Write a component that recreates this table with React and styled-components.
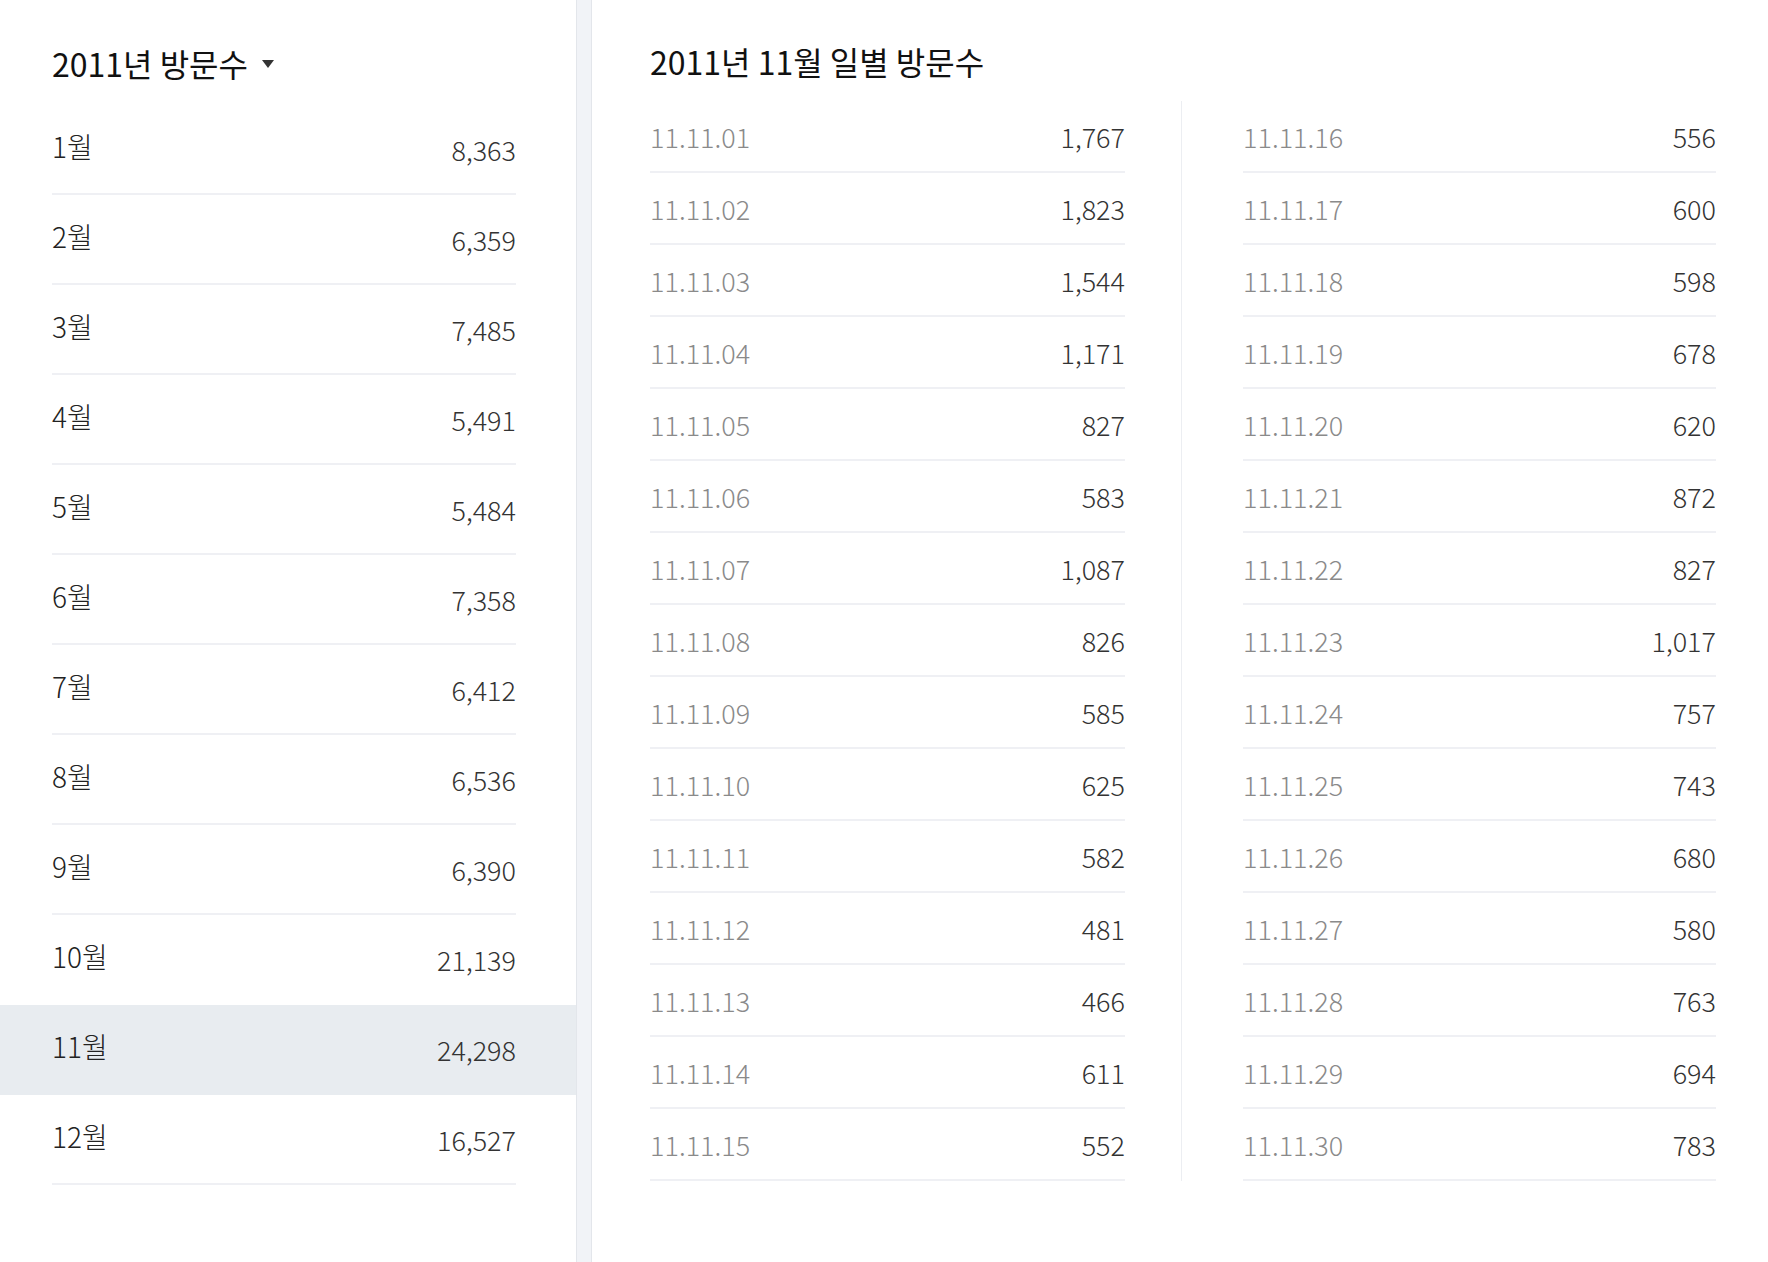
import React from "react";
import styled, { createGlobalStyle } from "styled-components";

const GlobalStyle = createGlobalStyle`
  html, body {
    margin: 0;
    padding: 0;
    background: #ffffff;
  }
  body {
    font-family: "Noto Sans CJK KR", "Noto Sans", sans-serif;
    font-weight: 300;
    color: #222;
  }
`;

const months = [
  ["1월", "8,363"],
  ["2월", "6,359"],
  ["3월", "7,485"],
  ["4월", "5,491"],
  ["5월", "5,484"],
  ["6월", "7,358"],
  ["7월", "6,412"],
  ["8월", "6,536"],
  ["9월", "6,390"],
  ["10월", "21,139"],
  ["11월", "24,298"],
  ["12월", "16,527"],
];

const daily = [
  1767, 1823, 1544, 1171, 827, 583, 1087, 826, 585, 625, 582, 481, 466, 611, 552,
  556, 600, 598, 678, 620, 872, 827, 1017, 757, 743, 680, 580, 763, 694, 783,
];

const Page = styled.div`
  display: flex;
  height: 100vh;
  overflow: hidden;
`;

const Sidebar = styled.aside`
  width: 576px;
  flex-shrink: 0;
  background: #fff;
`;

const ScrollTrack = styled.div`
  width: 14px;
  flex-shrink: 0;
  background: #f1f3f7;
  border-left: 1px solid #e3e6eb;
  border-right: 1px solid #e3e6eb;
`;

const SideHeader = styled.div`
  height: 105px;
  padding: 20px 52px 0;
  display: flex;
  align-items: center;
  box-sizing: border-box;
`;

const SideTitle = styled.h2`
  margin: 0;
  font-size: 32px;
  font-weight: 400;
  color: #111;
  display: flex;
  align-items: center;
  gap: 14px;
`;

const Caret = styled.span`
  width: 0;
  height: 0;
  border-left: 6px solid transparent;
  border-right: 6px solid transparent;
  border-top: 8px solid #333;
  margin-top: 2px;
`;

const MonthList = styled.ul`
  list-style: none;
  margin: 0;
  padding: 0;
`;

const MonthItem = styled.li`
  background: ${(p) => (p.$active ? "#e8ecf0" : "transparent")};
  padding: 0 60px 0 52px;
`;

const MonthInner = styled.div`
  height: 90px;
  box-sizing: border-box;
  display: flex;
  align-items: center;
  justify-content: space-between;
  border-bottom: 2px solid ${(p) => (p.$hideLine ? "transparent" : "#eff0f4")};
`;

const MonthLabel = styled.span`
  font-size: 28px;
  color: #222;
  margin-top: -6px;
`;

const MonthValue = styled.span`
  font-size: 27px;
  color: #333;
`;

const Main = styled.main`
  flex: 1;
  padding: 0 52px 0 58px;
`;

const MainHeader = styled.div`
  height: 101px;
  padding-top: 20px;
  box-sizing: border-box;
  display: flex;
  align-items: center;
`;

const MainTitle = styled.h2`
  margin: 0;
  font-size: 32px;
  font-weight: 400;
  color: #111;
`;

const Columns = styled.div`
  display: grid;
  grid-template-columns: 531px 1fr;
`;

const Column = styled.div`
  padding: ${(p) => (p.$right ? "0 0 0 61px" : "0 56px 0 0")};
  border-left: ${(p) => (p.$right ? "1px solid #eceef2" : "none")};
`;

const DayRow = styled.div`
  height: 72px;
  box-sizing: border-box;
  display: flex;
  align-items: center;
  justify-content: space-between;
  border-bottom: 2px solid #eff0f4;
`;

const DayDate = styled.span`
  font-size: 27px;
  color: #8a8a8a;
`;

const DayValue = styled.span`
  font-size: 27px;
  color: #333;
`;

const fmt = (n) => n.toLocaleString("en-US");

const DayColumn = ({ start, right }) => (
  <Column $right={right}>
    {daily.slice(start, start + 15).map((v, i) => {
      const d = String(start + i + 1).padStart(2, "0");
      return (
        <DayRow key={d}>
          <DayDate>11.11.{d}</DayDate>
          <DayValue>{fmt(v)}</DayValue>
        </DayRow>
      );
    })}
  </Column>
);

export default function App() {
  return (
    <Page>
      <GlobalStyle />
      <Sidebar>
        <SideHeader>
          <SideTitle>
            2011년 방문수 <Caret />
          </SideTitle>
        </SideHeader>
        <MonthList>
          {months.map(([label, value]) => (
            <MonthItem key={label} $active={label === "11월"}>
              <MonthInner $hideLine={label === "10월" || label === "11월"}>
                <MonthLabel>{label}</MonthLabel>
                <MonthValue>{value}</MonthValue>
              </MonthInner>
            </MonthItem>
          ))}
        </MonthList>
      </Sidebar>
      <ScrollTrack />
      <Main>
        <MainHeader>
          <MainTitle>2011년 11월 일별 방문수</MainTitle>
        </MainHeader>
        <Columns>
          <DayColumn start={0} />
          <DayColumn start={15} right />
        </Columns>
      </Main>
    </Page>
  );
}
